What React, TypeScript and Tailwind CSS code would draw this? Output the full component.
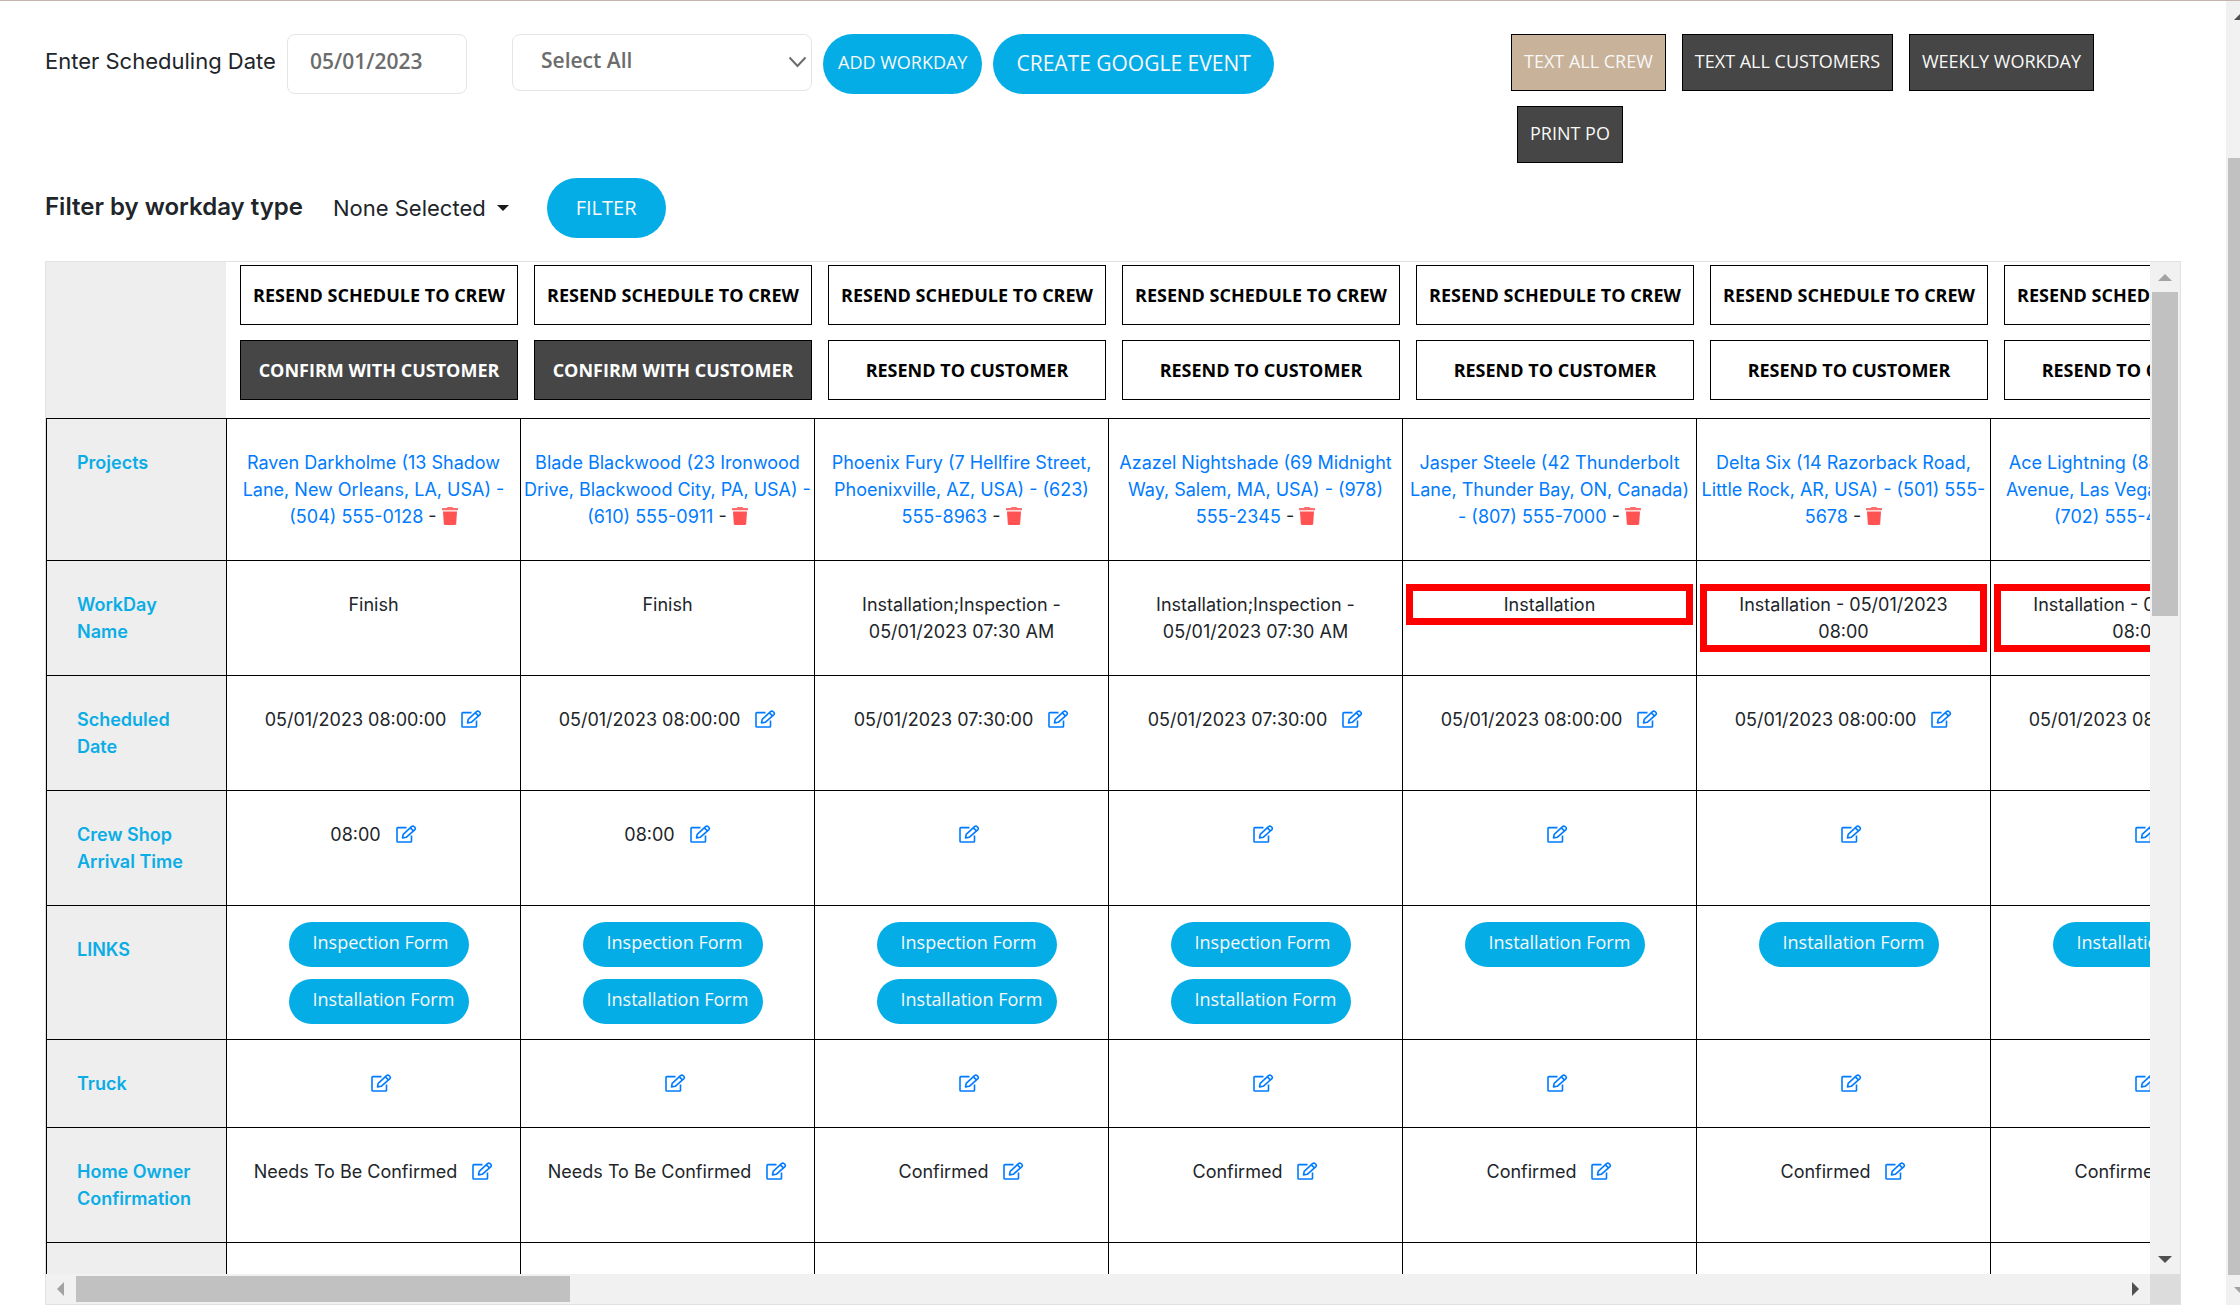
import { ReactNode } from "react";

type Job = {
  project: string[];
  workday: string[];
  alert?: boolean;
  unconfirmed?: boolean;
  date: string;
  arrival?: string;
  forms: string[];
};

const both = ["Inspection Form", "Installation Form"];

const jobs: Job[] = [
  {
    project: ["Raven Darkholme (13 Shadow", "Lane, New Orleans, LA, USA) -", "(504) 555-0128"],
    workday: ["Finish"],
    unconfirmed: true,
    date: "05/01/2023 08:00:00",
    arrival: "08:00",
    forms: both,
  },
  {
    project: ["Blade Blackwood (23 Ironwood", "Drive, Blackwood City, PA, USA) -", "(610) 555-0911"],
    workday: ["Finish"],
    unconfirmed: true,
    date: "05/01/2023 08:00:00",
    arrival: "08:00",
    forms: both,
  },
  {
    project: ["Phoenix Fury (7 Hellfire Street,", "Phoenixville, AZ, USA) - (623)", "555-8963"],
    workday: ["Installation;Inspection -", "05/01/2023 07:30 AM"],
    date: "05/01/2023 07:30:00",
    forms: both,
  },
  {
    project: ["Azazel Nightshade (69 Midnight", "Way, Salem, MA, USA) - (978)", "555-2345"],
    workday: ["Installation;Inspection -", "05/01/2023 07:30 AM"],
    date: "05/01/2023 07:30:00",
    forms: both,
  },
  {
    project: ["Jasper Steele (42 Thunderbolt", "Lane, Thunder Bay, ON, Canada)", "- (807) 555-7000"],
    workday: ["Installation"],
    alert: true,
    date: "05/01/2023 08:00:00",
    forms: ["Installation Form"],
  },
  {
    project: ["Delta Six (14 Razorback Road,", "Little Rock, AR, USA) - (501) 555-", "5678"],
    workday: ["Installation - 05/01/2023", "08:00"],
    alert: true,
    date: "05/01/2023 08:00:00",
    forms: ["Installation Form"],
  },
  {
    project: ["Ace Lightning (88 Neon Storm", "Avenue, Las Vegas, NV, USA) -", "(702) 555-4321"],
    workday: ["Installation - 05/01/2023", "08:00"],
    alert: true,
    date: "05/01/2023 08:00:00",
    forms: ["Installation Form"],
  },
];

function Lines({ lines }: { lines: string[] }) {
  return (
    <>
      {lines.map((line, i) => (
        <span key={line}>
          {i > 0 && <br />}
          {line}
        </span>
      ))}
    </>
  );
}

function EditButton({ label }: { label: string }) {
  return (
    <button type="button" aria-label={label} className="ml-[15px] inline-block cursor-pointer align-[-2px] text-[#007bff]">
      <svg width="21" height="18" viewBox="0 0 21 18" fill="none" stroke="currentColor" strokeWidth="1.6">
        <path d="M10.500 2.600H1.800a.8.8 0 0 0-.8.8v12.800c0 .5.300.8.800.8h12.900c.5 0 .8-.300.8-.8V10.500" />
        <path d="M6.500 12.900l.7-3.600 8.300-7.600a1.900 1.900 0 0 1 2.700 0l.6.600a1.800 1.800 0 0 1-.1 2.500l-8.500 7.500z" strokeLinejoin="round" />
        <path d="M14.300 2.900l3.200 3" />
      </svg>
    </button>
  );
}

function TrashButton() {
  return (
    <button type="button" aria-label="Delete project" className="inline-block cursor-pointer align-[-2px] text-[#ff5252]">
      <svg width="16" height="18" viewBox="0 0 16 18" fill="currentColor">
        <path d="M5.500 0h5l.6 1H15.300c.4 0 .7.300.7.700V3.300H0V1.700C0 1.300.3 1 .7 1H4.900z" opacity=".85" />
        <path d="M1 4.500h14l-.8 12.300c0 .7-.5 1.200-1.200 1.200H3c-.7 0-1.200-.5-1.200-1.200z" />
      </svg>
    </button>
  );
}

function HeaderButton({ children, dark }: { children: ReactNode; dark?: boolean }) {
  return (
    <button
      type="button"
      className={
        "h-[60px] w-full whitespace-nowrap border border-black font-['Open_Sans'] text-[18px] font-bold " +
        (dark ? "bg-[#464646] text-white" : "bg-white text-black")
      }
    >
      {children}
    </button>
  );
}

function ToolButton({ children, tan }: { children: ReactNode; tan?: boolean }) {
  return (
    <button
      type="button"
      className={
        "ml-1.5 h-[57px] whitespace-nowrap border border-black px-3 pb-0.5 font-['Open_Sans'] text-[18px] text-[#f8f8f8] first:ml-0 " +
        (tan ? "bg-[#c8b299]" : "bg-[#464646]")
      }
    >
      {children}
    </button>
  );
}

function Row({ label, cell }: { label?: ReactNode; cell?: (job: Job) => ReactNode }) {
  return (
    <tr>
      <th scope="row" className="border-t border-l border-black bg-[#eee] py-[30px] pr-3 pl-[30px] text-left align-top font-semibold whitespace-nowrap text-[#0bade6]">
        {label}
      </th>
      {jobs.map((job) => (
        <td key={job.project[0]} className="border-t border-l border-black p-0 text-center align-top whitespace-nowrap">
          {cell?.(job)}
        </td>
      ))}
    </tr>
  );
}

function Arrow({ dir, dim }: { dir: "up" | "down" | "left" | "right"; dim?: boolean }) {
  const paths = { up: "M8 19l7-7 7 7z", down: "M8 12l7 7 7-7z", left: "M18 8l-7 7 7 7z", right: "M12 8l7 7-7 7z" };
  return (
    <svg width="30" height="30" viewBox="0 0 30 30" className="shrink-0" fill={dim ? "#a3a3a3" : "#505050"}>
      <path d={paths[dir]} />
    </svg>
  );
}

export default function App() {
  return (
    <div className="flex h-screen overflow-hidden border-t border-[#c4b3b1] bg-white font-['Inter',sans-serif] text-[#212529]">
      <main className="flex min-w-0 flex-1 flex-col px-[45px] pt-[33px]">
        <div className="flex items-start justify-between">
          <div className="flex items-start">
            <label htmlFor="date" className="w-[242px] pt-3 text-[22px] leading-[30px] whitespace-nowrap">
              Enter Scheduling Date
            </label>
            <input
              id="date"
              defaultValue="05/01/2023"
              className="h-[60px] w-[180px] rounded-lg border border-[#e5e5e5] px-[22px] pb-1.5 font-['Open_Sans'] text-[21px] font-semibold text-[#6c6c6c]"
            />
            <div className="relative ml-[45px] text-[#6c6c6c]">
              <select
                aria-label="Workday"
                className="h-[57px] w-[300px] appearance-none rounded-lg border border-[#e5e5e5] bg-white px-7 pb-1 font-['Open_Sans'] text-[21px] font-semibold"
              >
                <option>Select All</option>
              </select>
              <svg className="pointer-events-none absolute top-[22px] right-[5px]" width="19" height="12" viewBox="0 0 19 12" fill="none" stroke="currentColor" strokeWidth="2">
                <path d="M1.500 1.500l8 8.500 8-8.500" />
              </svg>
            </div>
            <button type="button" className="ml-[11px] h-[60px] rounded-full bg-[#05ade7] px-[15px] pb-[3px] font-['Open_Sans'] text-[18px] whitespace-nowrap text-[#f8f8f8]">
              ADD WORKDAY
            </button>
            <button type="button" className="ml-[11px] h-[60px] rounded-full bg-[#05ade7] px-[23px] font-['Open_Sans'] text-[21px] whitespace-nowrap text-[#f8f8f8]">
              CREATE GOOGLE EVENT
            </button>
          </div>
          <div className="flex w-[670px] flex-wrap gap-x-2.5 gap-y-[15px]">
            <ToolButton tan>TEXT ALL CREW</ToolButton>
            <ToolButton>TEXT ALL CUSTOMERS</ToolButton>
            <ToolButton>WEEKLY WORKDAY</ToolButton>
            <ToolButton>PRINT PO</ToolButton>
          </div>
        </div>

        <div className="mt-[15px] flex h-[60px] items-center">
          <h2 className="pb-0.5 text-[24px] font-semibold whitespace-nowrap">Filter by workday type</h2>
          <button type="button" className="ml-[30px] flex items-center gap-[11px] text-[22px] whitespace-nowrap">
            None Selected
            <svg width="12" height="6" viewBox="0 0 12 6" fill="#1a1a1a">
              <path d="M0 0h12L6 6z" />
            </svg>
          </button>
          <button type="button" className="ml-[38px] h-[60px] rounded-full bg-[#05ade7] px-[29px] font-['Open_Sans'] text-[20px] text-[#f8f8f8]">
            FILTER
          </button>
        </div>

        <section className="mt-[23px] grid min-h-0 flex-1 grid-cols-[minmax(0,1fr)_30px] grid-rows-[minmax(0,1fr)_30px] border border-[#e1e1e1]">
          <div className="overflow-hidden">
            <table className="w-[2238px] table-fixed border-separate border-spacing-0 text-[18px] leading-[27px]">
              <colgroup>
                <col className="w-[180px]" />
                {jobs.map((job) => (
                  <col key={job.project[0]} className="w-[294px]" />
                ))}
              </colgroup>
              <thead>
                <tr>
                  <td className="bg-[#eee]" />
                  {jobs.map((job) => (
                    <td key={job.project[0]} className="pt-[3px] pr-0.5 pb-[18px] pl-3.5">
                      <div className="flex flex-col gap-[15px]">
                        <HeaderButton>RESEND SCHEDULE TO CREW</HeaderButton>
                        <HeaderButton dark={job.unconfirmed}>
                          {job.unconfirmed ? "CONFIRM WITH CUSTOMER" : "RESEND TO CUSTOMER"}
                        </HeaderButton>
                      </div>
                    </td>
                  ))}
                </tr>
              </thead>
              <tbody>
                <Row
                  label="Projects"
                  cell={(job) => (
                    <div className="py-[30px]">
                      <a href="#project" className="text-[#007bff]">
                        <Lines lines={job.project} />
                      </a>
                      {" - "}
                      <TrashButton />
                    </div>
                  )}
                />
                <Row
                  label={<Lines lines={["WorkDay", "Name"]} />}
                  cell={(job) => (
                    <div className={job.alert ? "mx-[3px] my-[23px] border-7 border-[#f00]" : "py-[30px]"}>
                      <Lines lines={job.workday} />
                    </div>
                  )}
                />
                <Row
                  label={<Lines lines={["Scheduled", "Date"]} />}
                  cell={(job) => (
                    <div className="py-[30px]">
                      {job.date}
                      <EditButton label="Edit scheduled date" />
                    </div>
                  )}
                />
                <Row
                  label={<Lines lines={["Crew Shop", "Arrival Time"]} />}
                  cell={(job) => (
                    <div className="py-[30px]">
                      {job.arrival}
                      <EditButton label="Edit arrival time" />
                    </div>
                  )}
                />
                <Row
                  label="LINKS"
                  cell={(job) => (
                    <div className="flex min-h-[133px] flex-col items-center gap-3 pt-4 pb-[15px] pl-2.5">
                      {job.forms.map((form) => (
                        <a key={form} href="#form" className="h-[45px] w-[180px] rounded-full bg-[#05ade7] pt-[7px] pl-6 text-left font-['Open_Sans'] text-[#f8f8f8]">
                          {form}
                        </a>
                      ))}
                    </div>
                  )}
                />
                <Row
                  label="Truck"
                  cell={() => (
                    <div className="py-[30px]">
                      <EditButton label="Edit truck" />
                    </div>
                  )}
                />
                <Row
                  label={<Lines lines={["Home Owner", "Confirmation"]} />}
                  cell={(job) => (
                    <div className="py-[30px]">
                      {job.unconfirmed ? "Needs To Be Confirmed" : "Confirmed"}
                      <EditButton label="Edit confirmation" />
                    </div>
                  )}
                />
                <Row />
              </tbody>
            </table>
          </div>
          <div className="flex flex-col items-center bg-[#f1f1f1]">
            <Arrow dir="up" dim />
            <div className="h-[324px] w-[26px] bg-[#c1c1c1]" />
            <div className="flex-1" />
            <Arrow dir="down" />
          </div>
          <div className="flex items-center bg-[#f1f1f1]">
            <Arrow dir="left" dim />
            <div className="h-[26px] w-[494px] bg-[#c1c1c1]" />
            <div className="flex-1" />
            <Arrow dir="right" />
          </div>
          <div className="bg-[#dcdcdc]" />
        </section>
      </main>
      <div className="flex w-3.5 flex-col overflow-hidden bg-[#f1f1f1]">
        <Arrow dir="up" />
        <div className="h-[127px] shrink-0" />
        <div className="ml-0.5 flex-1 bg-[#c1c1c1]" />
        <Arrow dir="down" dim />
      </div>
    </div>
  );
}
